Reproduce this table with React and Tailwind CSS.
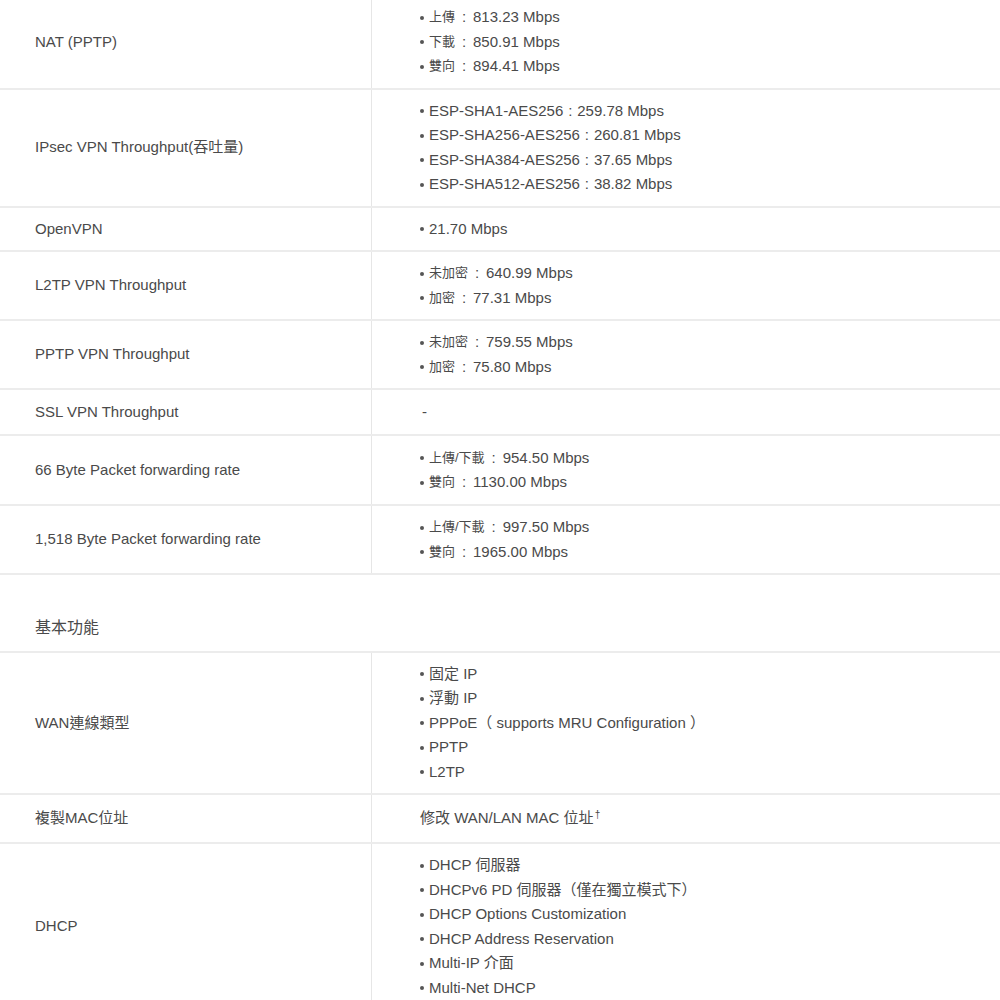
import React from "react";

const FONT = {
  fontFamily: '"Liberation Sans", Arial, "Noto Sans CJK TC", sans-serif',
};

function Item({ k, v, cjk, children }) {
  return (
    <div className="flex items-center h-[24.5px] whitespace-nowrap">
      <span className="inline-block w-[4px] h-[4px] rounded-full bg-[#555] mr-[5px] mt-[1px]" />
      {children ? (
        <span>{children}</span>
      ) : (
        <span className="flex items-center">
          <span className={cjk ? "text-[13px]" : ""}>{k}</span>
          <span className={"inline-block text-center " + (cjk ? "w-[18px]" : "w-[14px]")}>:</span>
          <span>{v}</span>
        </span>
      )}
    </div>
  );
}

function Row({ label, children, className = "" }) {
  return (
    <div className={"flex border-b-2 border-[#ececec] " + className}>
      <div className="w-[372px] shrink-0 flex items-center pl-[35px] border-r border-[#e6e6e6]">
        {label}
      </div>
      <div className="flex-1 py-[9px] pl-[48px] flex flex-col justify-center">
        {children}
      </div>
    </div>
  );
}

export default function App() {
  return (
    <div
      className="w-[1000px] h-[1000px] overflow-hidden bg-white text-[15px] leading-[24.5px] text-[#4a4a4a]"
      style={FONT}
    >
      <div className="-mt-[4px]">
        <Row label="NAT (PPTP)">
          <Item cjk k="上傳" v="813.23 Mbps" />
          <Item cjk k="下載" v="850.91 Mbps" />
          <Item cjk k="雙向" v="894.41 Mbps" />
        </Row>
        <Row label="IPsec VPN Throughput(吞吐量)">
          <Item k="ESP-SHA1-AES256" v="259.78 Mbps" />
          <Item k="ESP-SHA256-AES256" v="260.81 Mbps" />
          <Item k="ESP-SHA384-AES256" v="37.65 Mbps" />
          <Item k="ESP-SHA512-AES256" v="38.82 Mbps" />
        </Row>
        <Row label="OpenVPN">
          <Item>21.70 Mbps</Item>
        </Row>
        <Row label="L2TP VPN Throughput">
          <Item cjk k="未加密" v="640.99 Mbps" />
          <Item cjk k="加密" v="77.31 Mbps" />
        </Row>
        <Row label="PPTP VPN Throughput">
          <Item cjk k="未加密" v="759.55 Mbps" />
          <Item cjk k="加密" v="75.80 Mbps" />
        </Row>
        <Row label="SSL VPN Throughput" className="min-h-[46px]">
          <div className="h-[24.5px] pl-[2px]">-</div>
        </Row>
        <Row label="66 Byte Packet forwarding rate" className="min-h-[70px]">
          <Item cjk k="上傳/下載" v="954.50 Mbps" />
          <Item cjk k="雙向" v="1130.00 Mbps" />
        </Row>
        <Row label="1,518 Byte Packet forwarding rate" className="min-h-[69px]">
          <Item cjk k="上傳/下載" v="997.50 Mbps" />
          <Item cjk k="雙向" v="1965.00 Mbps" />
        </Row>

        <div className="border-b-2 border-[#ececec] pl-[35px] pt-[41px] pb-[10px] text-[16px]">
          基本功能
        </div>

        <Row label="WAN連線類型">
          <Item>固定 IP</Item>
          <Item>浮動 IP</Item>
          <Item>PPPoE（ supports MRU Configuration ）</Item>
          <Item>PPTP</Item>
          <Item>L2TP</Item>
        </Row>
        <Row label="複製MAC位址" className="min-h-[49px]">
          <div className="h-[24.5px] whitespace-nowrap">
            修改 WAN/LAN MAC 位址<sup className="text-[10px] ml-[1px]">†</sup>
          </div>
        </Row>
        <Row label="DHCP">
          <Item>DHCP 伺服器</Item>
          <Item>DHCPv6 PD 伺服器（僅在獨立模式下）</Item>
          <Item>DHCP Options Customization</Item>
          <Item>DHCP Address Reservation</Item>
          <Item>Multi-IP 介面</Item>
          <Item>Multi-Net DHCP</Item>
        </Row>
      </div>
    </div>
  );
}
